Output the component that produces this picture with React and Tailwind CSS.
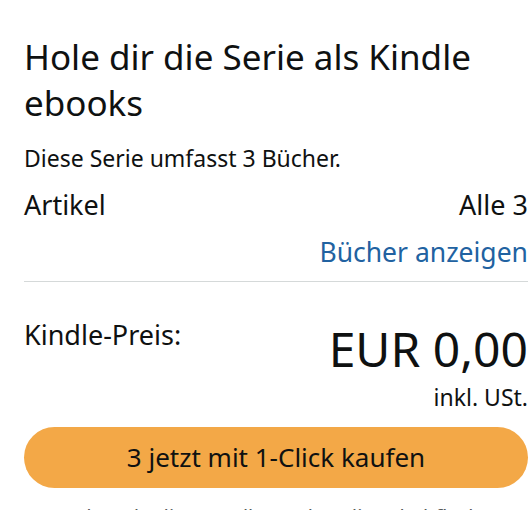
export default function App() {
  return (
    <div className="h-[510px] w-[532px] overflow-hidden bg-white pl-6 pr-1 pt-[34px] font-['Noto_Sans',sans-serif] text-[#0f1111]">
      <h1 className="text-[35px] leading-[46px] font-normal">Hole dir die Serie als Kindle ebooks</h1>
      <p className="mt-[17px] text-[23px] leading-[30px]">Diese Serie umfasst 3 Bücher.</p>
      <div className="mt-[15px] flex items-center justify-between text-[27px] leading-[34px]">
        <span>Artikel</span>
        <span>Alle 3</span>
      </div>
      <div className="mt-[13px] text-right text-[26.5px] leading-[34px] text-[#2162a1]">Bücher anzeigen</div>
      <hr className="mt-[12px] border-t border-[#d5d9d9]" />
      <div className="mt-[35px] flex items-start justify-between">
        <span className="text-[27px] leading-[36px]">Kindle-Preis:</span>
        <span className="mt-[4px] text-[48px] leading-[56px]">EUR 0,00</span>
      </div>
      <div className="mt-[5px] text-right text-[23px] leading-[30px]">inkl. USt.</div>
      <button className="mt-[15px] flex h-[61px] w-full items-center justify-center rounded-full bg-[#f3a847] text-[26px]">
        3 jetzt mit 1-Click kaufen
      </button>
      <p className="mt-[15px] whitespace-nowrap text-center text-[20px] leading-[28px] text-[#565959]">
        Indem du die Bestellung über die Schaltfläche
      </p>
    </div>
  );
}
